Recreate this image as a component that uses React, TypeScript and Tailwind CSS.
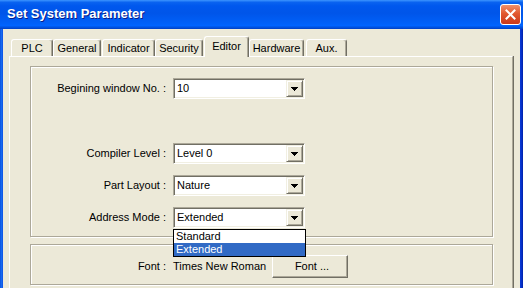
import React from 'react';

const tabs = [
  { label: 'PLC', w: 'w-[42px]', ml: 'ml-0' },
  { label: 'General', w: 'w-[48px]', ml: 'ml-0' },
  { label: 'Indicator', w: 'w-[53px]', ml: 'ml-px' },
  { label: 'Security', w: 'w-[48px]', ml: 'ml-0' },
  { label: 'Editor', w: 'w-[45px]', ml: 'ml-px', active: true },
  { label: 'Hardware', w: 'w-[55px]', ml: 'ml-0' },
  { label: 'Aux.', w: 'w-[41px]', ml: 'ml-[2px]' },
];

function Arrow() {
  return (
    <svg width="7" height="4" viewBox="0 0 7 4" shapeRendering="crispEdges">
      <rect x="0" y="0" width="7" height="1" fill="#000" />
      <rect x="1" y="1" width="5" height="1" fill="#000" />
      <rect x="2" y="2" width="3" height="1" fill="#000" />
      <rect x="3" y="3" width="1" height="1" fill="#000" />
    </svg>
  );
}

function Combo({ value, open }: { value: string; open?: boolean }) {
  return (
    <div className="relative w-[132px] h-[21px]">
      <div className="h-full flex border border-[#aca899] border-b-white border-r-white bg-white p-px shadow-[inset_1px_1px_0_#716f64,inset_-1px_-1px_0_#f1efe2]">
        <span className="flex-1 pl-[2px] leading-[17px] truncate">{value}</span>
        <div className="w-[17px] h-[17px] flex items-center justify-center bg-[#ece9d8] border border-[#f1efe2] border-r-[#716f64] border-b-[#716f64] shadow-[inset_1px_1px_0_#fff,inset_-1px_-1px_0_#aca899]">
          <Arrow />
        </div>
      </div>
      {open && (
        <div className="absolute left-0 top-[22px] z-20 w-[133px] border border-black bg-white">
          <div className="h-[13px] leading-[13px] pl-[2px]">Standard</div>
          <div className="h-[13px] leading-[13px] pl-[2px] bg-[#316ac5] text-white">Extended</div>
        </div>
      )}
    </div>
  );
}

function Row({ label, value, open, mt }: { label: string; value: string; open?: boolean; mt: string }) {
  return (
    <div className={`flex items-center ${mt}`}>
      <span className="w-[135px] text-right">{label}</span>
      <div className="ml-[7px]">
        <Combo value={value} open={open} />
      </div>
    </div>
  );
}

export default function App() {
  return (
    <div className="w-[523px] h-[288px] overflow-hidden flex flex-col bg-[#0831d9] font-['Liberation_Sans',Arial,sans-serif] text-[11px] text-black">
      {/* title bar */}
      <div className="h-[29px] shrink-0 flex items-center justify-between pl-[7px] pr-[2px] bg-[linear-gradient(180deg,#3d95ff_0%,#0a63f0_8%,#0058ee_20%,#0055e9_45%,#0060f8_80%,#0064ff_88%,#0050dd_95%,#003fc4_100%)]">
        <span className="text-white font-bold text-[13px] [text-shadow:1px_1px_0_#0a1e8a] pb-px">Set System Parameter</span>
        <div className="w-[21px] h-[21px] rounded-[3px] border border-white flex items-center justify-center bg-[linear-gradient(180deg,#f0906c_0%,#e2582f_45%,#c9381a_100%)]">
          <svg width="11" height="11" viewBox="0 0 11 11">
            <path d="M1.5 1.5L9.5 9.5M9.5 1.5L1.5 9.5" stroke="#fff" strokeWidth="2" strokeLinecap="square" />
          </svg>
        </div>
      </div>

      <div className="flex-1 flex min-h-0">
        <div className="w-[3px] bg-[linear-gradient(90deg,#0b4fe0,#166aee,#0d4ee6)]" />
        <div className="flex-1 flex flex-col bg-[#ece9d8] pl-[6px] pr-[7px] pt-[7px]">
          {/* tabs */}
          <div className="flex items-start h-[20px] pl-[2px] shrink-0">
            {tabs.map((t) =>
              t.active ? (
                <div
                  key={t.label}
                  className={`${t.w} ${t.ml} relative z-10 h-[21px] pb-[2px] flex items-center justify-center bg-[#ece9d8] rounded-t-[3px] border-l border-t border-white border-r border-r-[#716f64] shadow-[inset_-1px_0_0_#aca899]`}
                >
                  {t.label}
                </div>
              ) : (
                <div
                  key={t.label}
                  className={`${t.w} ${t.ml} mt-[3px] h-[17px] flex items-center justify-center rounded-t-[3px] border-l border-t border-white border-r border-r-[#716f64] shadow-[inset_-1px_0_0_#aca899]`}
                >
                  {t.label}
                </div>
              )
            )}
          </div>

          {/* tab panel */}
          <div className="flex-1 border-l border-t border-white border-r border-r-[#aca899] shadow-[1px_0_0_#716f64] pl-[20px] pr-[19px] pt-[9px]">
            <div className="h-[171px] border border-[#aca899] shadow-[inset_1px_1px_0_#fff,1px_1px_0_#fff]">
              <Row label="Begining window No. :" value="10" mt="mt-[11px]" />
              <Row label="Compiler Level :" value="Level 0" mt="mt-[44px]" />
              <Row label="Part Layout :" value="Nature" mt="mt-[11px]" />
              <Row label="Address Mode :" value="Extended" open mt="mt-[11px]" />
            </div>
            <div className="mt-[7px] h-[41px] border border-[#aca899] shadow-[inset_1px_1px_0_#fff,1px_1px_0_#fff] pt-[10px]">
              <div className="flex items-center h-[23px]">
                <span className="w-[135px] text-right">Font :</span>
                <span className="ml-[7px] w-[99px]">Times New Roman</span>
                <button className="w-[76px] h-[23px] bg-[#ece9d8] border border-white border-r-[#716f64] border-b-[#716f64] shadow-[inset_-1px_-1px_0_#aca899] pl-[4px]">
                  Font ...
                </button>
              </div>
            </div>
          </div>
        </div>
        <div className="w-[3px] bg-[linear-gradient(90deg,#0a3ad8,#0530c8,#0020a8)]" />
      </div>
    </div>
  );
}
